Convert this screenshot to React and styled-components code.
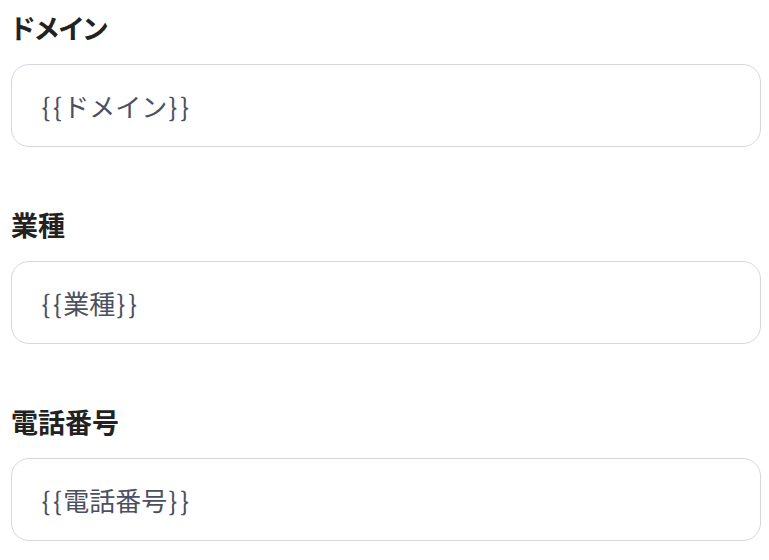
import React from "react";
import styled, { createGlobalStyle } from "styled-components";

const GlobalStyle = createGlobalStyle`
  body {
    margin: 0;
    background: #fff;
    font-family: Roboto, "Noto Sans CJK JP", sans-serif;
  }
`;

const Form = styled.div`
  display: flex;
  flex-direction: column;
  gap: 66px;
  padding: 16px 8px 0 11px;
`;

const Field = styled.div`
  display: flex;
  flex-direction: column;
  gap: 20px;
`;

const Label = styled.label`
  font-size: 27px;
  line-height: 28px;
  font-weight: 700;
  color: #222;
  font-feature-settings: "palt";
`;

const Input = styled.div`
  box-sizing: border-box;
  width: 750px;
  height: 83px;
  border: 1px solid #d4d7df;
  border-radius: 18px;
  padding: 0 28px;
  display: flex;
  align-items: center;
  font-family: "Noto Sans CJK JP", sans-serif;
  font-size: 26px;
  color: #4b5060;
`;

const Brace = styled.span`
  padding: 0 1.4px;
`;

const fields = ["ドメイン", "業種", "電話番号"];

export default function App() {
  return (
    <>
      <GlobalStyle />
      <Form>
        {fields.map((name) => (
          <Field key={name}>
            <Label>{name}</Label>
            <Input>
              <Brace>{"{"}</Brace>
              <Brace>{"{"}</Brace>
              {name}
              <Brace>{"}"}</Brace>
              <Brace>{"}"}</Brace>
            </Input>
          </Field>
        ))}
      </Form>
    </>
  );
}
